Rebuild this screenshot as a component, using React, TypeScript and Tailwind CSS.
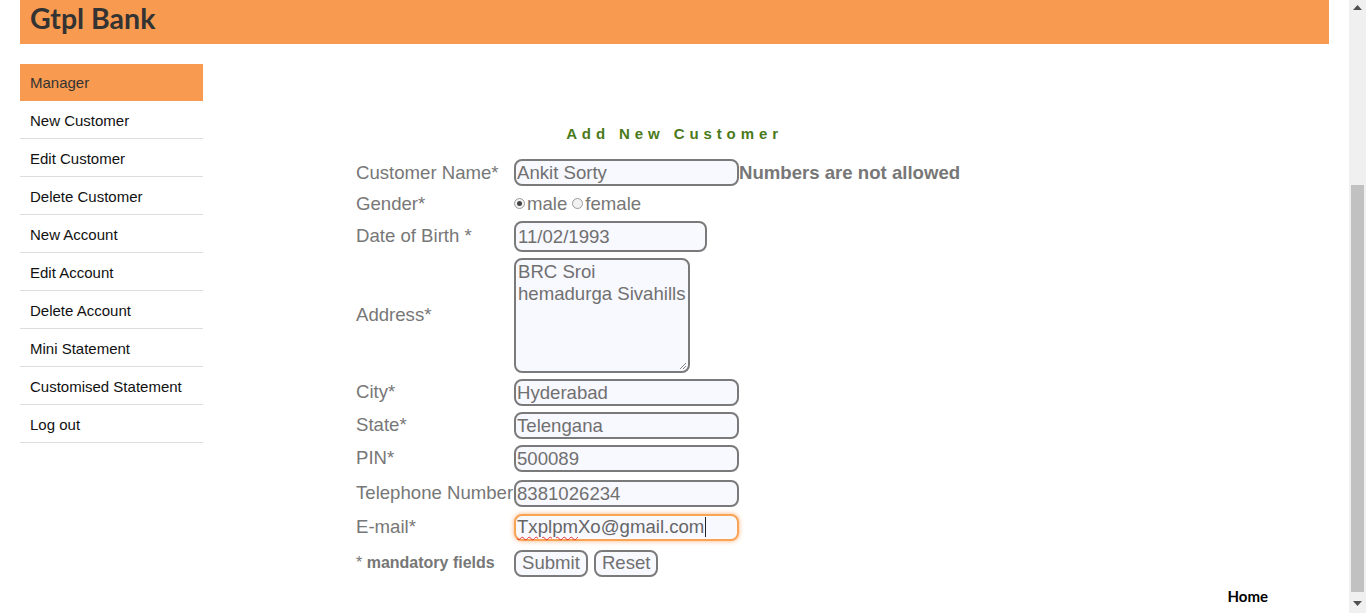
import React from 'react';

const MENU = [
  'New Customer',
  'Edit Customer',
  'Delete Customer',
  'New Account',
  'Edit Account',
  'Delete Account',
  'Mini Statement',
  'Customised Statement',
  'Log out',
];

const inputCls =
  'h-[27px] rounded-[8px] border-2 border-[#7a7a7a] bg-[#f8f8ff] pl-[1px] text-[18.6px] leading-[23px] text-[#707070]';

function Row({ label, h, children }: { label: React.ReactNode; h: string; children: React.ReactNode }) {
  return (
    <div className={`flex items-center ${h}`}>
      <div className="w-[158px] shrink-0 whitespace-nowrap text-[18.6px] text-[#777]">{label}</div>
      <div className="flex items-center">{children}</div>
    </div>
  );
}

function Radio({ checked }: { checked?: boolean }) {
  return (
    <span className="flex h-[11px] w-[11px] items-center justify-center rounded-full border border-[#9a9a9a] bg-[#f2f2f2]">
      {checked && <span className="h-[5px] w-[5px] rounded-full bg-[#444]" />}
    </span>
  );
}

export default function App() {
  return (
    <div className="flex h-[613px] w-[1366px] overflow-hidden bg-white font-['Liberation_Sans',Arial,sans-serif]">
      <div className="flex w-[1349px] flex-col px-[20px]">
        {/* Header */}
        <div className="h-[44px] shrink-0 bg-[#f89a50] pl-[10px] pt-[1px]">
          <span className="font-['Lato',sans-serif] text-[28.5px] font-bold leading-[34px] text-[#333]">Gtpl Bank</span>
        </div>

        <div className="mt-[20px] flex">
          {/* Sidebar */}
          <div className="w-[183px] shrink-0">
            <div className="flex h-[37px] items-center bg-[#f89a50] pl-[10px] pt-[2px] text-[15px] text-[#333]">Manager</div>
            {MENU.map((m) => (
              <div key={m} className="flex h-[38px] items-center border-b border-[#ddd] pl-[10px] pt-[3px] text-[15px] text-[#111]">
                {m}
              </div>
            ))}
          </div>

          {/* Form */}
          <div className="ml-[153px] w-[634px] pt-[61px]">
            <div className="pl-[3px] text-center text-[15px] font-bold leading-[17px] tracking-[4.9px] text-[#4a7a1a]">
              Add New Customer
            </div>
            <div className="mt-[15px] flex flex-col">
              <Row label="Customer Name*" h="h-[32px]">
                <div className={`${inputCls} w-[225px]`}>Ankit Sorty</div>
                <span className="whitespace-nowrap text-[18.6px] font-bold text-[#777]">Numbers are not allowed</span>
              </Row>
              <Row label="Gender*" h="h-[30px]">
                <div className="flex items-center text-[18.6px] text-[#777]">
                  <Radio checked />
                  <span className="ml-[2px]">male</span>
                  <span className="ml-[5px]" />
                  <Radio />
                  <span className="ml-[2px]">female</span>
                </div>
              </Row>
              <Row label="Date of Birth *" h="h-[34px]">
                <div className={`${inputCls} h-[31px] w-[193px] pl-[2px] leading-[27px]`}>11/02/1993</div>
              </Row>
              <Row label="Address*" h="h-[124px]">
                <div className="relative h-[115px] w-[176px] rounded-[8px] border-2 border-[#7a7a7a] bg-[#f8f8ff] pl-[2px] pt-[1px] text-[18.6px] leading-[22px] text-[#707070]">
                  <div>BRC Sroi</div>
                  <div className="whitespace-nowrap">hemadurga Sivahills</div>
                  <svg className="absolute bottom-[1px] right-[1px]" width="9" height="9" viewBox="0 0 9 9">
                    <path d="M8 2 L2 8 M8 5 L5 8" stroke="#888" strokeWidth="1" />
                  </svg>
                </div>
              </Row>
              <Row label="City*" h="h-[30px]">
                <div className={`${inputCls} w-[225px]`}>Hyderabad</div>
              </Row>
              <Row label="State*" h="h-[36px]">
                <div className={`${inputCls} w-[225px]`}>Telengana</div>
              </Row>
              <Row label="PIN*" h="h-[30px]">
                <div className={`${inputCls} w-[225px]`}>500089</div>
              </Row>
              <Row label="Telephone Number" h="h-[40px]">
                <div className={`${inputCls} w-[225px]`}>8381026234</div>
              </Row>
              <Row label="E-mail*" h="h-[28px]">
                <div className="flex h-[27px] w-[225px] items-center rounded-[8px] border-2 border-[#f9a455] bg-[#f8f8ff] pl-[1px] text-[18.6px] text-[#666] shadow-[0_0_5px_#f9b27a]">
                  <span className="underline decoration-wavy decoration-[#e03030] decoration-1 underline-offset-[3px]">Txplpm</span>
                  <span>Xo@gmail.com</span>
                  <span className="ml-[1px] h-[20px] w-[1px] bg-[#222]" />
                </div>
              </Row>
              <div className="flex h-[44px] items-center">
                <div className="w-[158px] shrink-0 whitespace-nowrap text-[16px] text-[#777]">
                  * <span className="font-bold">mandatory fields</span>
                </div>
                <div className="flex gap-[6px]">
                  <button className="h-[27px] rounded-[8px] border-2 border-[#7a7a7a] bg-[#f8f8ff] px-[6px] text-[18.6px] leading-[22px] text-[#707070]">
                    Submit
                  </button>
                  <button className="h-[27px] rounded-[8px] border-2 border-[#7a7a7a] bg-[#f8f8ff] px-[6px] text-[18.6px] leading-[22px] text-[#707070]">
                    Reset
                  </button>
                </div>
              </div>
            </div>
          </div>
        </div>

        <div className="flex justify-end pr-[61px] pt-[1px]">
          <span className="font-['Lato',sans-serif] text-[15px] font-bold leading-[20px] text-black">Home</span>
        </div>
      </div>

      {/* Scrollbar */}
      <div className="flex w-[17px] shrink-0 flex-col items-center bg-[#f0f0f0]">
        <svg className="mt-[5px]" width="9" height="5" viewBox="0 0 9 5">
          <path d="M0 5 L4.5 0 L9 5 Z" fill="#505050" />
        </svg>
        <div className="mt-[175px] h-[407px] w-[13px] bg-[#c1c1c1]" />
        <svg className="mt-[9px]" width="9" height="5" viewBox="0 0 9 5">
          <path d="M0 0 L4.5 5 L9 0 Z" fill="#505050" />
        </svg>
      </div>
    </div>
  );
}
